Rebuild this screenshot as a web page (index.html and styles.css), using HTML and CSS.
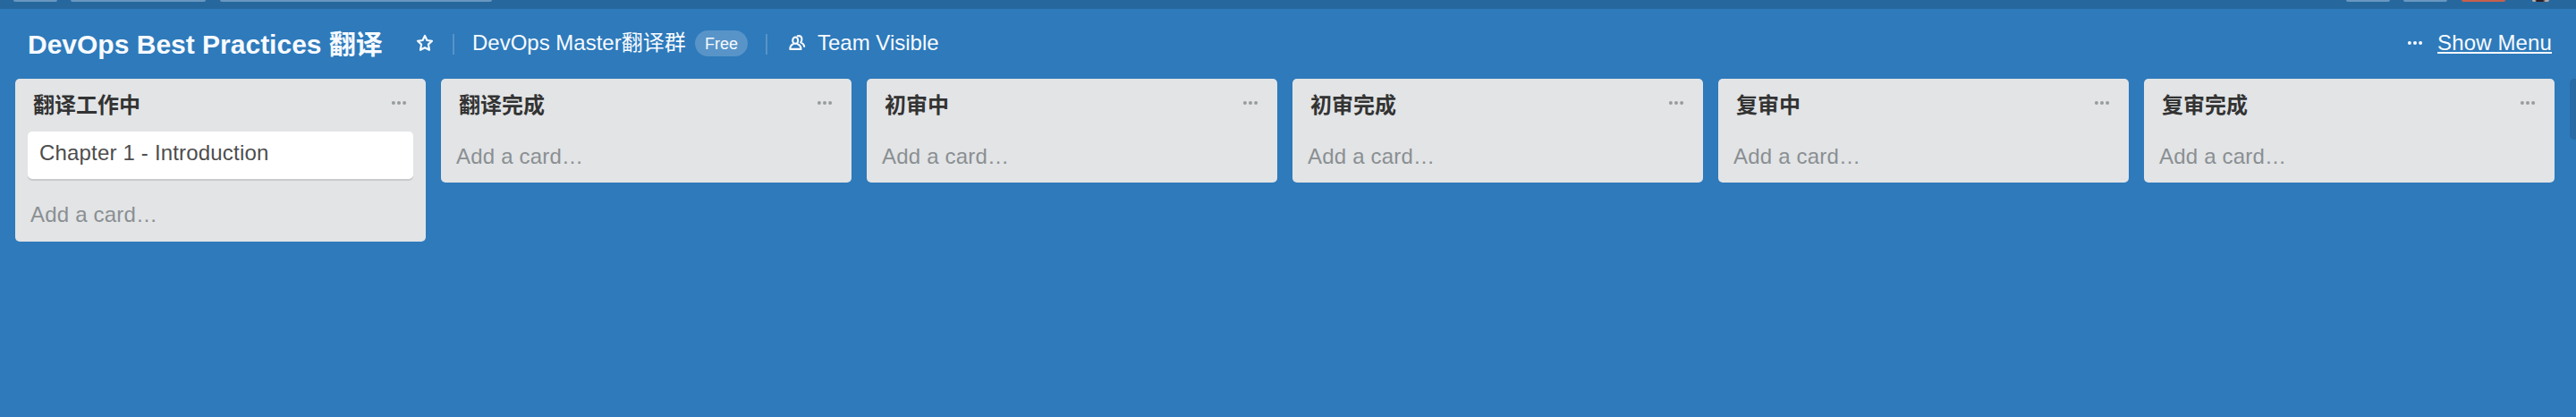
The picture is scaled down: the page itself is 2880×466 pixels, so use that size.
FILE: index.html
```html
<!DOCTYPE html>
<html lang="zh-CN">
<head>
<meta charset="utf-8">
<title>DevOps Best Practices 翻译</title>
<link rel="stylesheet" href="styles.css">
</head>
<body>
<svg width="0" height="0" class="defs">
  <symbol id="dots" viewBox="0 0 18 6"><circle cx="2.9" cy="3" r="2"/><circle cx="9" cy="3" r="2"/><circle cx="15.1" cy="3" r="2"/></symbol>
</svg>
<div class="topbar">
  <span class="tab tab-home"></span>
  <span class="tab tab-boards"></span>
  <span class="tab tab-search"></span>
  <span class="tab tab-add"></span>
  <span class="tab tab-info"></span>
  <span class="tab tab-alert"></span>
  <span class="avatar"></span>
</div>
<header class="board-header">
  <h1 class="board-name">DevOps Best Practices 翻译</h1>
  <svg class="star" viewBox="0 0 20 20"><path d="M10 1.9 L12.4 7 L18 7.8 L13.9 11.6 L15 17.8 L10 15.2 L5 17.8 L6.1 11.6 L2 7.8 L7.6 7 Z"/></svg>
  <span class="divider"></span>
  <span class="team">DevOps Master翻译群</span>
  <span class="plan">Free</span>
  <span class="divider divider-second"></span>
  <svg class="people" viewBox="0 0 20 20"><ellipse cx="8.200" cy="7.200" rx="3" ry="3.700"/><path d="M5.800 11.200C3.400 12 2.300 13.300 2.300 16.900H14.500C14.500 13.300 13.200 12 10.600 11.200"/><path d="M10.700 2.300C14 1.500 15.700 3.400 15.400 6.200C15.300 7.600 14.900 8.600 14.200 9.400C16.600 10.400 17.900 11.600 18.200 13.900"/></svg>
  <span class="visibility">Team Visible</span>
  <div class="menu">
    <svg class="dots"><use href="#dots"/></svg>
    <a class="menu-link">Show Menu</a>
  </div>
</header>
<main class="board">
  <section class="list">
    <div class="list-head"><h2 class="list-title">翻译工作中</h2><svg class="dots"><use href="#dots"/></svg></div>
    <div class="card">Chapter 1 - Introduction</div>
    <div class="add">Add a card…</div>
  </section>
  <section class="list">
    <div class="list-head"><h2 class="list-title">翻译完成</h2><svg class="dots"><use href="#dots"/></svg></div>
    <div class="add">Add a card…</div>
  </section>
  <section class="list">
    <div class="list-head"><h2 class="list-title">初审中</h2><svg class="dots"><use href="#dots"/></svg></div>
    <div class="add">Add a card…</div>
  </section>
  <section class="list">
    <div class="list-head"><h2 class="list-title">初审完成</h2><svg class="dots"><use href="#dots"/></svg></div>
    <div class="add">Add a card…</div>
  </section>
  <section class="list">
    <div class="list-head"><h2 class="list-title">复审中</h2><svg class="dots"><use href="#dots"/></svg></div>
    <div class="add">Add a card…</div>
  </section>
  <section class="list">
    <div class="list-head"><h2 class="list-title">复审完成</h2><svg class="dots"><use href="#dots"/></svg></div>
    <div class="add">Add a card…</div>
  </section>
  <section class="new-list"></section>
</main>
</body>
</html>
```
FILE: styles.css
```css
* { box-sizing: border-box; }
body {
  margin: 0;
  width: 2880px;
  height: 466px;
  overflow: hidden;
  background: #2e7abb;
  font: 24px/30px "Liberation Sans", "Noto Sans CJK SC", sans-serif;
  white-space: nowrap;
}
h1, h2 { margin: 0; }
svg { display: block; flex: none; }
.defs { position: absolute; }

.topbar {
  display: flex;
  align-items: flex-start;
  height: 10px;
  padding: 0 30px 0 15px;
  background: #26689e;
}
.tab {
  width: 49px;
  height: 2px;
  border-radius: 0 0 3px 3px;
  background: #6897bf;
}
.tab-boards { width: 151px; margin-left: 15px; }
.tab-search { width: 304px; margin-left: 16px; }
.tab-add { margin-left: auto; }
.tab-info { margin-left: 15px; }
.tab-alert { margin-left: 16px; background: #c85f4c; }
.avatar {
  width: 19px;
  height: 2px;
  margin-left: 30px;
  border-radius: 0 0 6px 6px;
  background: linear-gradient(90deg, #b9b5b4 3px, #2a2027 5px, #2a2027 12px, #b5aaa8 15px);
}

.board-header {
  display: flex;
  align-items: center;
  height: 76px;
  padding: 0 27px 0 31px;
  color: #f7faff;
}
.board-name {
  width: 397px;
  padding-top: 4px;
  font-size: 30px;
  line-height: 36px;
  font-weight: bold;
}
.star {
  width: 20px;
  height: 20px;
  margin-left: 37px;
  fill: none;
  stroke: currentColor;
  stroke-width: 2.2;
  stroke-linejoin: round;
}
.divider {
  width: 2px;
  height: 23px;
  margin: 2px 20px 0 21px;
  background: #5794c9;
}
.team { width: 238px; }
.plan {
  width: 59px;
  height: 29px;
  margin: 1px 0 0 11px;
  border-radius: 15px;
  background: #5894c8;
  font-size: 18px;
  line-height: 30px;
  text-align: center;
}
.divider-second { margin: 2px 23px 0 20px; }
.people {
  width: 20px;
  height: 20px;
  fill: none;
  stroke: currentColor;
  stroke-width: 2.1;
  stroke-linejoin: round;
  stroke-linecap: round;
}
.visibility { margin-left: 13px; }
.menu {
  display: flex;
  align-items: center;
  gap: 16px;
  margin-left: auto;
}
.menu-link {
  letter-spacing: .13px;
  text-decoration: underline;
  text-decoration-thickness: 2px;
  text-underline-offset: 2px;
  text-decoration-skip-ink: none;
}
.dots { width: 18px; height: 6px; fill: currentColor; }

.board {
  display: flex;
  align-items: flex-start;
  gap: 17px;
  padding: 2px 0 0 17px;
}
.list {
  flex: none;
  width: 459px;
  padding: 15px 14px 14px;
  border-radius: 5px;
  background: #e2e4e6;
}
.list-head {
  display: flex;
  justify-content: space-between;
  padding: 0 7px 0 6px;
  color: #999c9e;
}
.list-head .dots { margin-top: 9px; }
.list-title {
  color: #333;
  font-size: 24px;
  font-weight: bold;
}
.card {
  height: 53px;
  margin-top: 14px;
  padding: 9px 13px;
  border-radius: 5px;
  background: #fff;
  box-shadow: 0 2px 0 #c8cacc;
  color: #4d4d4d;
  letter-spacing: .18px;
}
.add {
  margin-top: 27px;
  padding-left: 3px;
  color: #8a8f92;
  letter-spacing: .2px;
}
.card + .add { margin: 25px 0 1px; }
.new-list {
  flex: none;
  width: 7px;
  height: 68px;
  border-radius: 5px 0 0 5px;
  background: #286ba5;
}
```
